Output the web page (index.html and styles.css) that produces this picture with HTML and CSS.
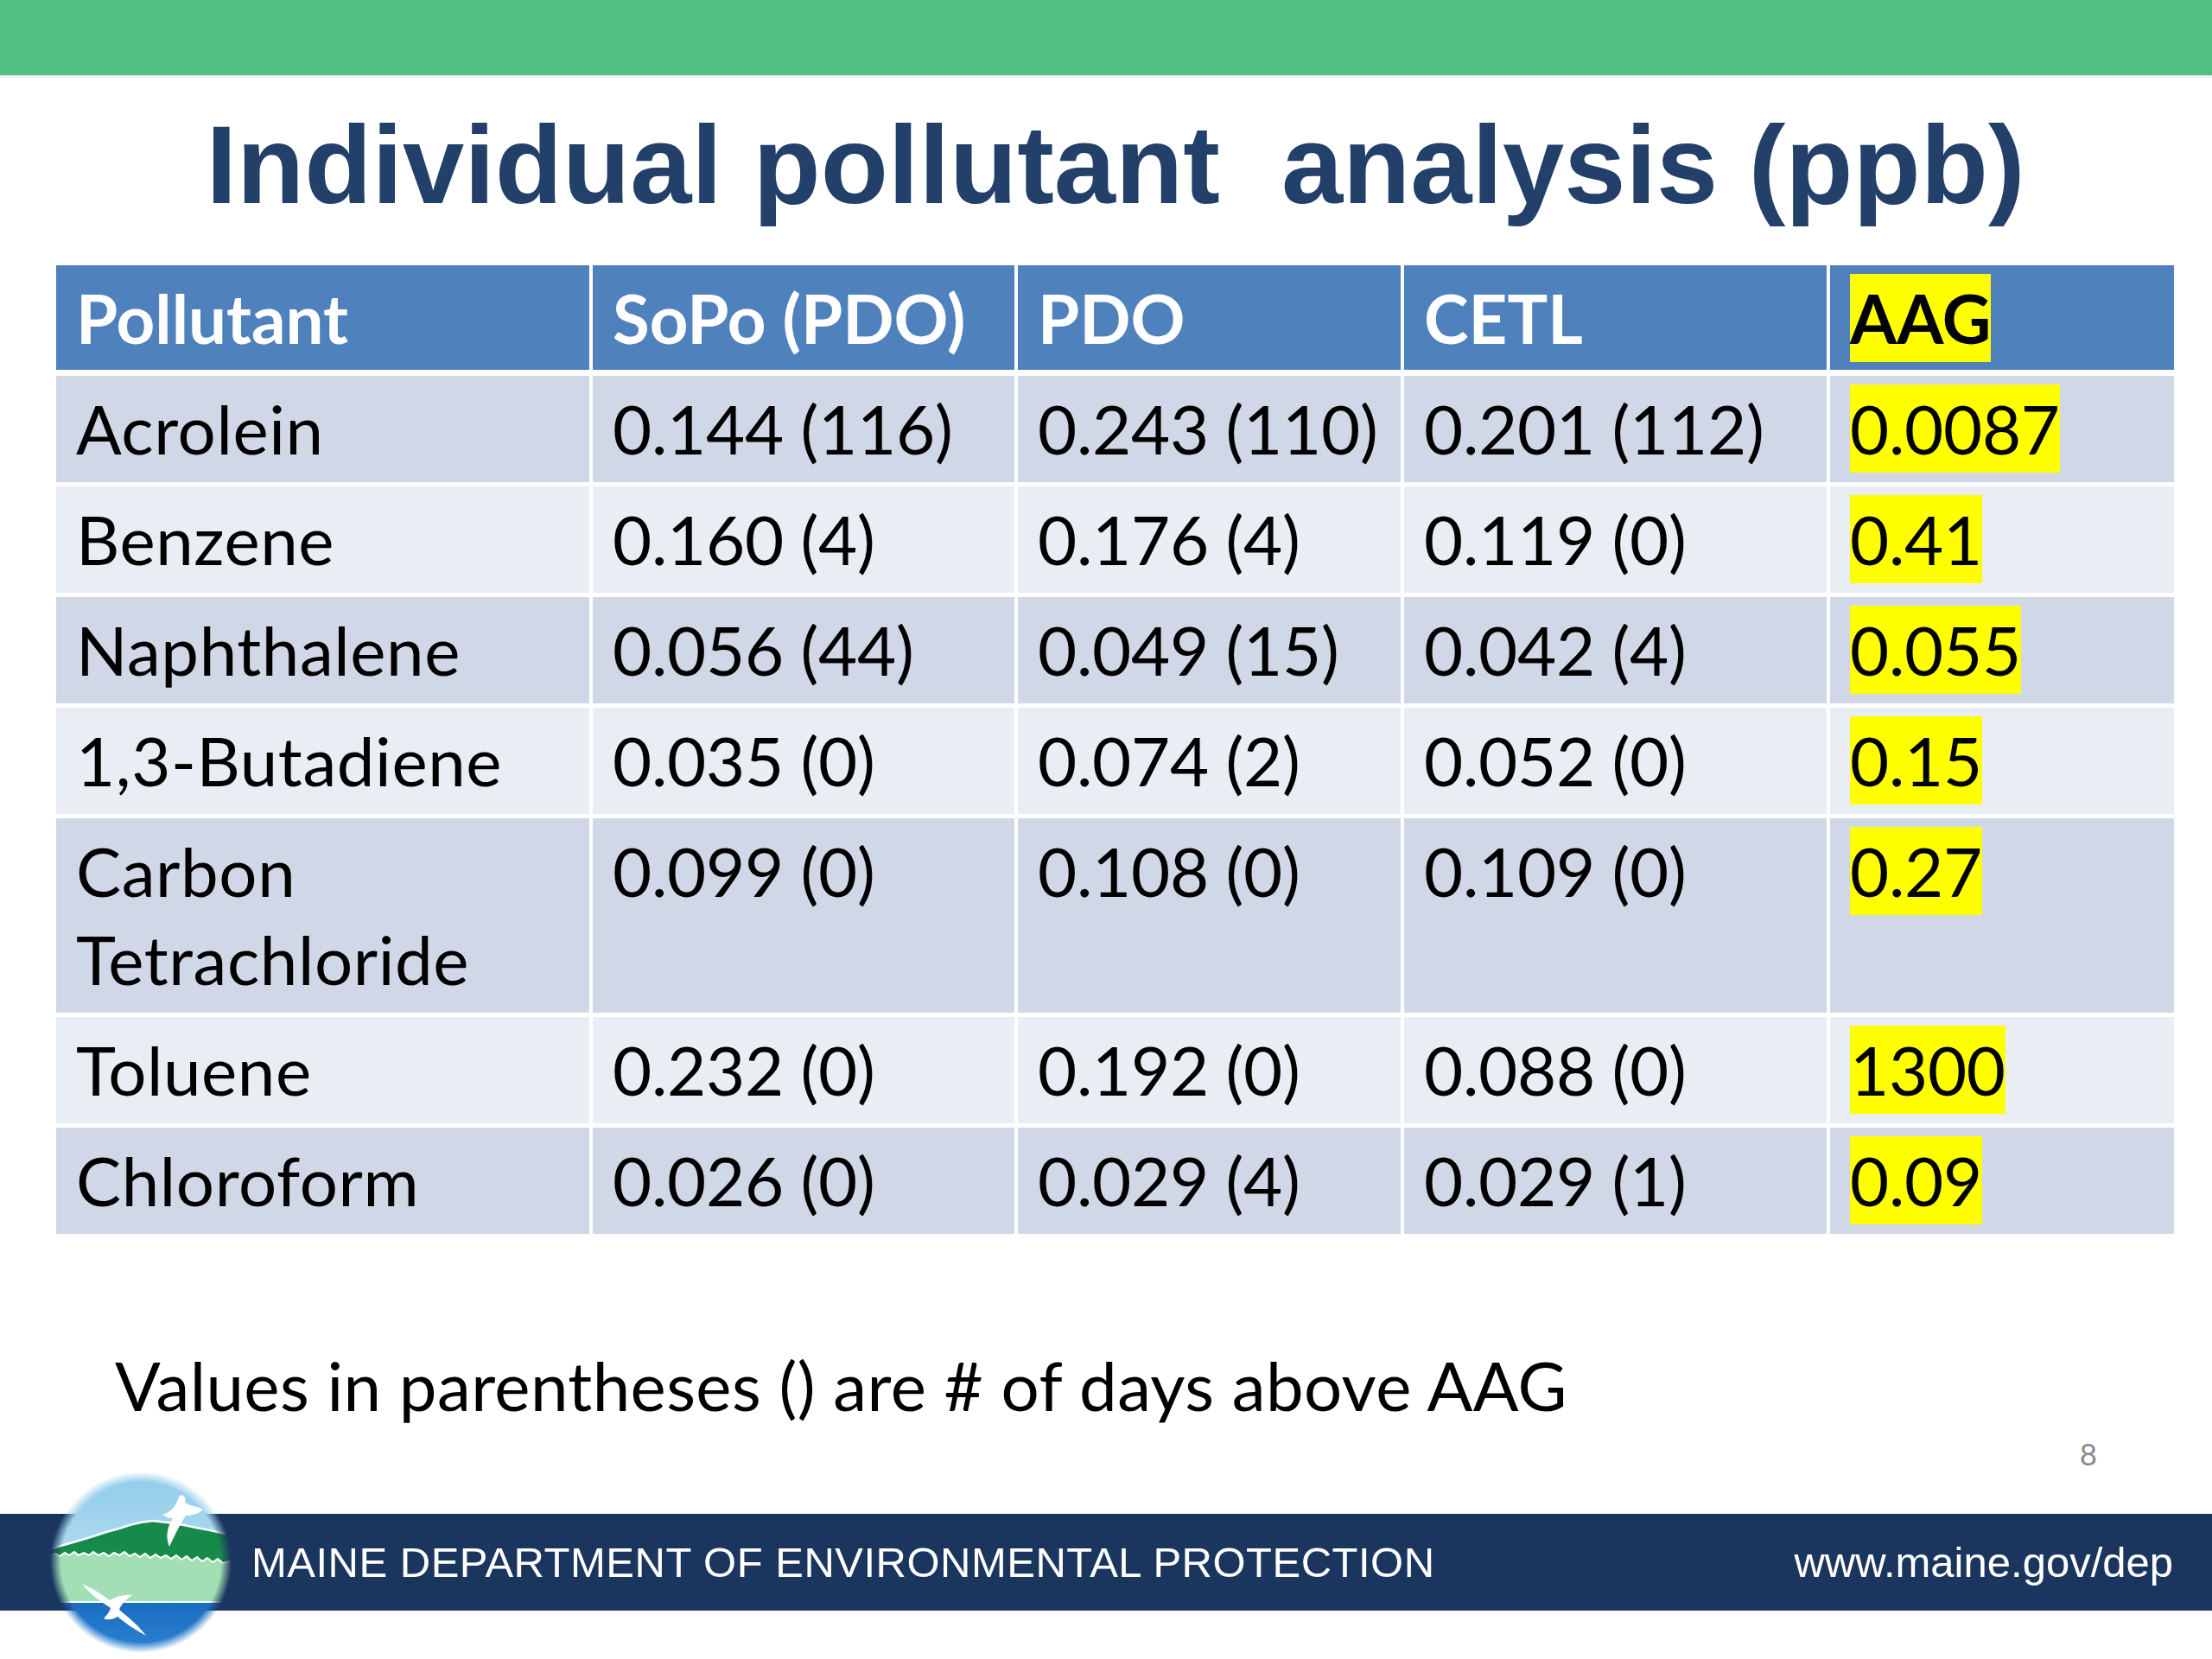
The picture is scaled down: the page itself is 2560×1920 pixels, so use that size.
FILE: index.html
```html
<!DOCTYPE html>
<html lang="en">
<head>
<meta charset="utf-8">
<title>Individual pollutant analysis (ppb)</title>
<link rel="stylesheet" href="styles.css">
</head>
<body>
<div class="slide">
  <div class="topbar"></div>
  <h1 class="title">Individual pollutant  analysis (ppb)</h1>

  <div class="table" role="table">
    <div class="cell head">Pollutant</div>
    <div class="cell head">SoPo (PDO)</div>
    <div class="cell head">PDO</div>
    <div class="cell head">CETL</div>
    <div class="cell head"><span class="hl">AAG</span></div>

    <div class="cell odd name">Acrolein</div>
    <div class="cell odd num">0.144 (116)</div>
    <div class="cell odd num">0.243 (110)</div>
    <div class="cell odd num">0.201 (112)</div>
    <div class="cell odd num"><span class="hl">0.0087</span></div>

    <div class="cell even name">Benzene</div>
    <div class="cell even num">0.160 (4)</div>
    <div class="cell even num">0.176 (4)</div>
    <div class="cell even num">0.119 (0)</div>
    <div class="cell even num"><span class="hl">0.41</span></div>

    <div class="cell odd name">Naphthalene</div>
    <div class="cell odd num">0.056 (44)</div>
    <div class="cell odd num">0.049 (15)</div>
    <div class="cell odd num">0.042 (4)</div>
    <div class="cell odd num"><span class="hl">0.055</span></div>

    <div class="cell even name">1,3-Butadiene</div>
    <div class="cell even num">0.035 (0)</div>
    <div class="cell even num">0.074 (2)</div>
    <div class="cell even num">0.052 (0)</div>
    <div class="cell even num"><span class="hl">0.15</span></div>

    <div class="cell odd name">Carbon<br>Tetrachloride</div>
    <div class="cell odd num">0.099 (0)</div>
    <div class="cell odd num">0.108 (0)</div>
    <div class="cell odd num">0.109 (0)</div>
    <div class="cell odd num"><span class="hl">0.27</span></div>

    <div class="cell even name">Toluene</div>
    <div class="cell even num">0.232 (0)</div>
    <div class="cell even num">0.192 (0)</div>
    <div class="cell even num">0.088 (0)</div>
    <div class="cell even num"><span class="hl">1300</span></div>

    <div class="cell odd name">Chloroform</div>
    <div class="cell odd num">0.026 (0)</div>
    <div class="cell odd num">0.029 (4)</div>
    <div class="cell odd num">0.029 (1)</div>
    <div class="cell odd num"><span class="hl">0.09</span></div>
  </div>

  <p class="note">Values in parentheses () are # of days above AAG</p>
  <div class="pagenum">8</div>

  <footer class="footer">
    <svg class="logo" viewBox="0 0 210 210" width="210" height="210" aria-hidden="true">
      <defs>
        <radialGradient id="fade" cx="50%" cy="50%" r="50%">
          <stop offset="0.88" stop-color="#fff"/>
          <stop offset="1" stop-color="#000"/>
        </radialGradient>
        <mask id="m">
          <rect width="210" height="210" fill="url(#fade)"/>
        </mask>
        <linearGradient id="sky" x1="0" y1="0" x2="0" y2="1">
          <stop offset="0" stop-color="#8fcbea"/>
          <stop offset="1" stop-color="#b3def1"/>
        </linearGradient>
        <linearGradient id="water" x1="0" y1="0" x2="0" y2="1">
          <stop offset="0" stop-color="#1b6cc0"/>
          <stop offset="1" stop-color="#2a82d2"/>
        </linearGradient>
      </defs>
      <g mask="url(#m)">
        <rect width="210" height="110" fill="url(#sky)"/>
        <path d="M0 90 L9 87 L30 81 L50 75 L65 70 L80 66 L92 62 L105 59 L119 57 L135 59 L150 61 L169 65 L185 68 L202 72 L210 73 L210 115 L0 115 Z" fill="#168a4a"/>
        <path d="M0 90 L9 87 L30 81 L50 75 L65 70 L80 66 L92 62 L105 59 L119 57 L135 59 L150 61 L169 65 L185 68 L202 72 L210 73" fill="none" stroke="#fff" stroke-width="2.5"/>
        <path d="M0 98 L6 95 L11 98 L17 94 L22 97 L28 93 L33 97 L39 94 L45 97 L50 93 L56 97 L62 94 L68 98 L74 94 L80 97 L86 93 L92 98 L98 95 L104 99 L110 95 L116 100 L122 96 L128 100 L134 97 L140 101 L146 97 L152 102 L158 98 L164 103 L170 99 L176 104 L182 100 L188 105 L194 101 L200 106 L210 103 L210 152 L0 152 Z" fill="#a2dfb4" stroke="#fff" stroke-width="2"/>
        <rect y="151" width="210" height="59" fill="url(#water)"/>
        <line x1="0" y1="151" x2="210" y2="151" stroke="#fff" stroke-width="2"/>
        <path d="M130 50 C140 47 146 40 149 29 C152 25 158 28 156 36 C162 40 170 40 177 44 C171 50 163 51 157 51 C151 60 145 72 138 87 C133 76 136 63 142 54 C138 54 134 53 130 50 Z" fill="#fff"/>
        <path d="M37 130 C50 136 60 142 69 149 C78 144 86 142 95 143 C88 148 82 154 80 160 C92 170 102 178 111 190 C98 183 88 176 78 168 C72 172 66 172 62 170 C66 166 69 162 70 158 C58 150 46 142 37 130 Z" fill="#fff"/>
      </g>
    </svg>
    <span class="org">MAINE DEPARTMENT OF ENVIRONMENTAL PROTECTION</span>
    <span class="url">www.maine.gov/dep</span>
  </footer>
</div>
</body>
</html>
```

FILE: styles.css
```css
html, body {
  margin: 0;
  padding: 0;
  background: #ffffff;
}

.slide {
  width: 2560px;
  height: 1920px;
  overflow: hidden;
  font-family: Lato, "Open Sans", sans-serif;
  color: #000000;
}

.topbar {
  height: 87px;
  background: #51bf82;
  box-shadow: 0 2px 3px rgba(0, 0, 0, 0.12);
}

.title {
  margin: 29px 0 0 0;
  padding-left: 22px;
  font-family: "Liberation Sans", Arial, sans-serif;
  font-weight: 700;
  font-size: 128px;
  line-height: 150px;
  color: #23406a;
  text-align: center;
  white-space: pre;
}

.table {
  margin: 41px 0 0 65px;
  display: grid;
  grid-template-columns: 617px 488px 443px 489px 398px;
  column-gap: 4px;
  row-gap: 5px;
  width: max-content;
}

.cell {
  padding: 10px 10px 11px 23px;
  font-size: 78px;
  line-height: 102px;
}

.name {
  letter-spacing: 0.6px;
}

.num {
  letter-spacing: -0.3px;
}

.head {
  height: 100px;
  padding-top: 10px;
  padding-bottom: 11px;
  margin-bottom: 2px;
  background: #4f81bd;
  color: #ffffff;
  font-weight: 700;
}

.odd {
  background: #d0d8e8;
}

.even {
  background: #e9edf4;
}

.hl {
  display: inline-block;
  background: #ffff00;
  color: #000000;
}

.note {
  margin: 124px 0 0 0;
  padding-left: 133px;
  font-size: 78px;
  line-height: 102px;
  letter-spacing: 0.4px;
}

.pagenum {
  margin-top: 7px;
  padding-right: 133px;
  text-align: right;
  font-size: 35px;
  line-height: 42px;
  color: #8a8a8a;
}

.footer {
  margin-top: 49px;
  height: 112px;
  background: #1b365e;
  display: flex;
  align-items: center;
  padding: 0 45px 0 58px;
  font-family: "Liberation Sans", Arial, sans-serif;
  color: #ffffff;
  font-size: 49px;
}

.logo {
  flex: none;
  width: 210px;
  height: 210px;
}

.org {
  margin-left: 23px;
  letter-spacing: 0.5px;
}

.url {
  margin-left: auto;
}
```
